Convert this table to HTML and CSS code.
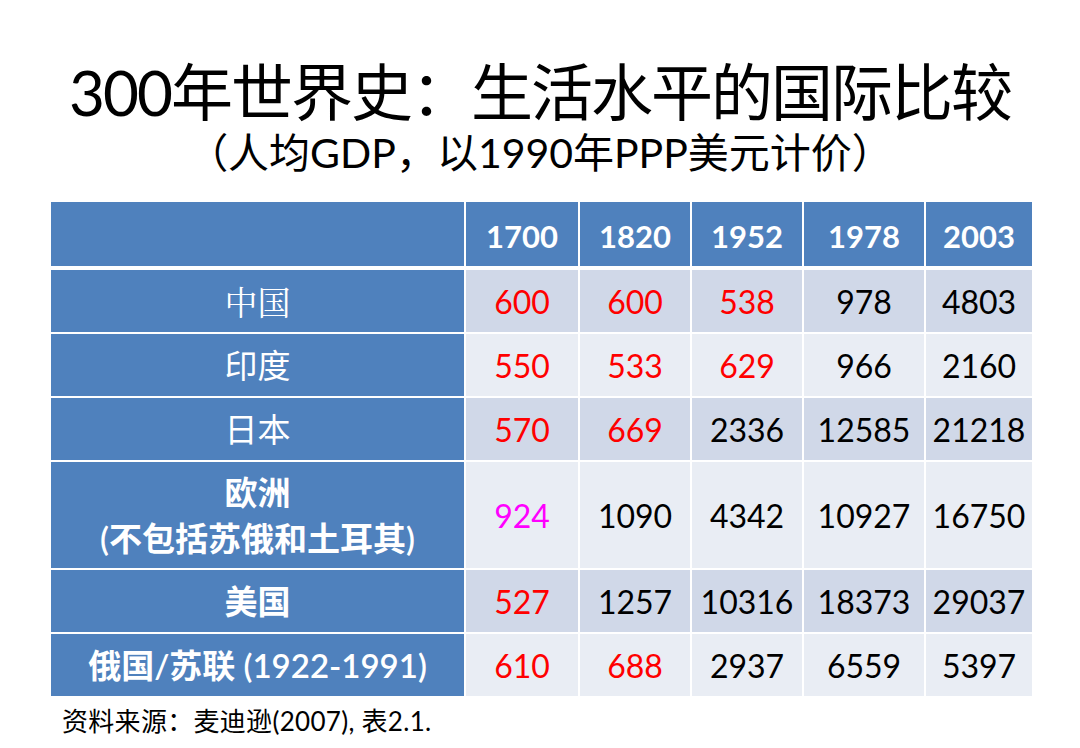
FILE: index.html
```html
<!DOCTYPE html>
<html lang="zh">
<head>
<meta charset="utf-8">
<link rel="stylesheet" href="styles.css">
</head>
<body>
<div class="slide">
  <h1 class="title">300年世界史：生活水平的国际比较</h1>
  <p class="subtitle">（人均GDP，以1990年PPP美元计价）</p>
  <table class="gdp">
    <colgroup>
      <col class="c-name"><col class="c-a"><col class="c-b"><col class="c-c"><col class="c-d"><col class="c-e">
    </colgroup>
    <thead>
      <tr><th></th><th>1700</th><th>1820</th><th>1952</th><th>1978</th><th>2003</th></tr>
    </thead>
    <tbody>
      <tr class="odd"><th class="serif">中国</th><td class="red">600</td><td class="red">600</td><td class="red">538</td><td>978</td><td>4803</td></tr>
      <tr class="even"><th>印度</th><td class="red">550</td><td class="red">533</td><td class="red">629</td><td>966</td><td>2160</td></tr>
      <tr class="odd"><th>日本</th><td class="red">570</td><td class="red">669</td><td>2336</td><td>12585</td><td>21218</td></tr>
      <tr class="even tall"><th class="bold">欧洲<br>(不包括苏俄和土耳其)</th><td class="magenta">924</td><td>1090</td><td>4342</td><td>10927</td><td>16750</td></tr>
      <tr class="odd"><th class="bold">美国</th><td class="red">527</td><td>1257</td><td>10316</td><td>18373</td><td>29037</td></tr>
      <tr class="even"><th class="bold">俄国/苏联 (1922-1991)</th><td class="red">610</td><td class="red">688</td><td>2937</td><td>6559</td><td>5397</td></tr>
    </tbody>
  </table>
  <p class="source">资料来源：麦迪逊(2007), 表2.1.</p>
</div>
</body>
</html>
```

FILE: styles.css
```css
html, body {
  margin: 0;
  padding: 0;
  background: #ffffff;
}
.slide {
  width: 1080px;
  height: 748px;
  overflow: hidden;
  font-family: "Lato", "Noto Sans CJK SC", sans-serif;
  color: #000;
}
.title {
  margin: 54px 0 0 0;
  font-size: 62px;
  font-weight: 400;
  line-height: 76px;
  text-align: center;
  letter-spacing: -2px;
}
.subtitle {
  margin: -2px 0 0 0;
  font-size: 41px;
  line-height: 50px;
  text-align: center;
  letter-spacing: 0;
}
.gdp {
  margin: 24px 0 0 51px;
  width: 981px;
  table-layout: fixed;
  border-collapse: collapse;
  font-size: 32px;
}
.c-name { width: 414px; }
.c-a { width: 114px; }
.c-b { width: 112px; }
.c-c { width: 112px; }
.c-d { width: 122px; }
.c-e { width: 107px; }
.gdp th, .gdp td {
  border: 2px solid #ffffff;
  text-align: center;
  padding: 0;
  white-space: nowrap;
}
.gdp thead th {
  background: #4f81bd;
  color: #ffffff;
  font-weight: 700;
  font-size: 31px;
  height: 60px;
  border-bottom-width: 4px;
  padding-top: 4px;
}
.gdp thead tr th:first-child,
.gdp tbody th:first-child { border-left: 0; }
.gdp tr > *:last-child { border-right: 0; }
.gdp thead th { border-top: 0; }
.gdp tbody tr:last-child > * { border-bottom: 0; }
.gdp tbody th {
  background: #4f81bd;
  color: #ffffff;
  font-weight: 400;
  font-size: 33px;
  height: 62px;
  line-height: 40px;
}
.gdp tbody th.bold { font-weight: 600; }
.gdp tbody th.serif { font-family: "Noto Serif CJK SC", "Noto Sans CJK SC", serif; }
.gdp tbody tr.tall th { height: 106px; line-height: 46px; }
.gdp tr.odd td { background: #d0d8e8; }
.gdp tr.even td { background: #e9edf4; }
.red { color: #ff0000; }
.magenta { color: #ff00ff; }
.source {
  margin: 10px 0 0 62px;
  font-size: 26px;
  line-height: 30px;
  letter-spacing: 0.3px;
}
```
